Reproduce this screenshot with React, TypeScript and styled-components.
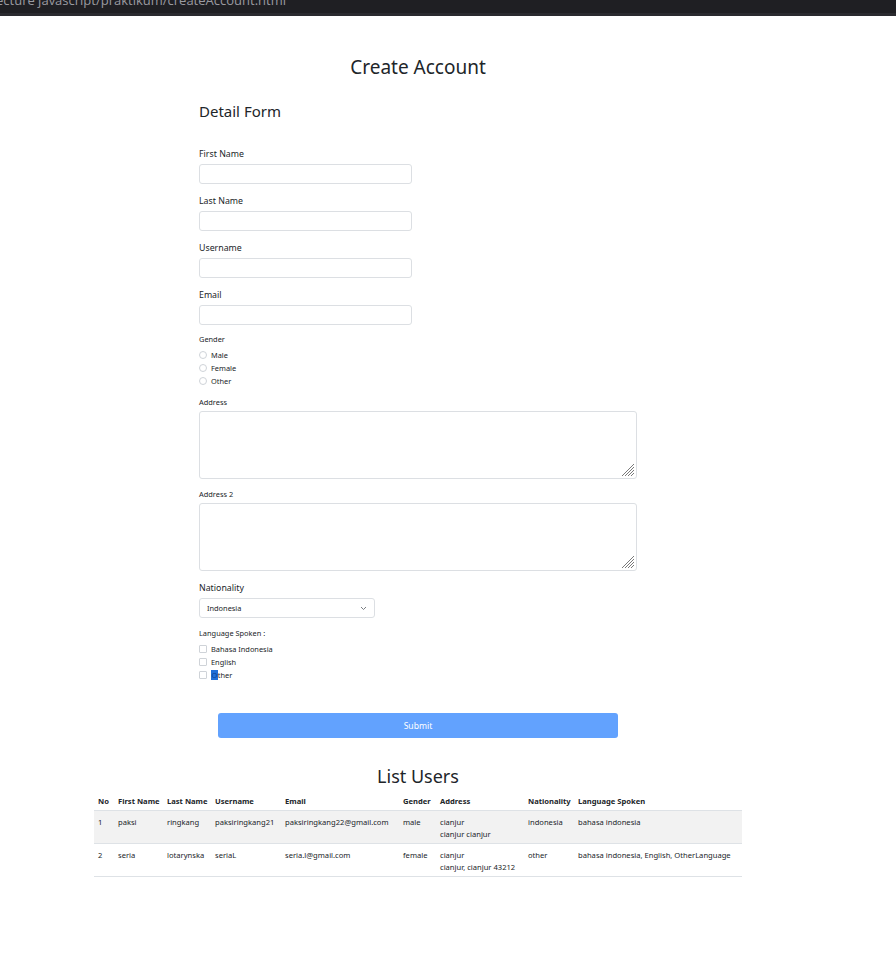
import React from "react";
import styled, { createGlobalStyle } from "styled-components";

const Global = createGlobalStyle`
  html, body { margin: 0; padding: 0; background: #fff; }
  body { font-family: "Noto Sans", "Open Sans", sans-serif; color: #212529; }
  * { box-sizing: border-box; }
`;

const TopBar = styled.div`
  height: 16px;
  background: #1f1f23;
  border-bottom: 3px solid #2a2a2f;
  overflow: hidden;
`;

const BarText = styled.div`
  font-family: "Open Sans", sans-serif;
  font-size: 13px;
  color: #9a9aa0;
  line-height: 13px;
  margin-top: -6px;
  margin-left: -4px;
  white-space: nowrap;
`;

const Page = styled.div`
  width: 836px;
  display: flex;
  flex-direction: column;
  align-items: center;
  padding-top: 38px;
`;

const Title = styled.h1`
  font-size: 19px;
  font-weight: 400;
  margin: 0;
  line-height: 26px;
  text-align: center;
`;

const Form = styled.form`
  width: 438px;
  display: flex;
  flex-direction: column;
  margin-top: 21px;
`;

const FormTitle = styled.h2`
  font-size: 15px;
  font-weight: 400;
  margin: 0 0 27px;
  line-height: 20px;
`;

const Field = styled.div<{ $mb?: number }>`
  display: flex;
  flex-direction: column;
  margin-bottom: ${(p) => p.$mb ?? 8}px;
`;

const Label = styled.label<{ $small?: boolean }>`
  font-size: ${(p) => (p.$small ? 7.4 : 8.8)}px;
  line-height: ${(p) => (p.$small ? 10 : 12)}px;
  margin-bottom: 4px;
  color: #212529;
`;

const TextInput = styled.input`
  width: 213px;
  height: 20px;
  border: 1px solid #dcdfe3;
  border-radius: 3px;
  background: #fff;
  outline: none;
  padding: 0 6px;
`;

const Options = styled.div`
  display: flex;
  flex-direction: column;
  gap: 2px;
  padding-top: 1px;
`;

const Option = styled.div`
  display: flex;
  align-items: center;
  height: 11px;
  font-size: 7.4px;
  color: #212529;
`;

const Radio = styled.span`
  width: 8px;
  height: 8px;
  border: 1px solid #cfd3d8;
  border-radius: 50%;
  margin: 0 4px 0 0;
  flex: none;
`;

const Box = styled.span`
  width: 8px;
  height: 8px;
  border: 1px solid #cfd3d8;
  border-radius: 1px;
  margin: 0 4px 0 0;
  flex: none;
`;

const AreaWrap = styled.div`
  position: relative;
  width: 438px;
  height: 68px;
`;

const Area = styled.textarea`
  display: block;
  width: 438px;
  height: 68px;
  border: 1px solid #dcdfe3;
  border-radius: 3px;
  outline: none;
  resize: none;
`;

const Grip = styled.svg`
  position: absolute;
  right: 2px;
  bottom: 2px;
  pointer-events: none;
`;

const Select = styled.div`
  width: 176px;
  height: 20px;
  border: 1px solid #dcdfe3;
  border-radius: 3px;
  display: flex;
  align-items: center;
  justify-content: space-between;
  padding: 0 7px 0 7px;
  font-size: 7.4px;
`;

const Sel = styled.span`
  background: #1f6fd8;
  color: #0d3f8f;
  padding: 0 0.5px;
`;

const Submit = styled.button`
  width: 400px;
  height: 25px;
  margin: 33px auto 0;
  background: #62a2fe;
  border: none;
  border-radius: 3px;
  color: #fff;
  font-family: "Noto Sans", sans-serif;
  font-size: 8.6px;
`;

const ListTitle = styled.h2`
  font-size: 18px;
  font-weight: 400;
  margin: 27px 0 6px;
  line-height: 22px;
`;

const Table = styled.table`
  width: 648px;
  border-collapse: collapse;
  table-layout: fixed;
  font-size: 7.6px;
`;

const Col = styled.col<{ $w: number }>`
  width: ${(p) => p.$w}px;
`;

const Th = styled.th`
  text-align: left;
  font-weight: 700;
  padding: 3px 4px 4px;
  height: 17px;
  white-space: nowrap;
`;

const Tr = styled.tr<{ $striped?: boolean }>`
  background: ${(p) => (p.$striped ? "#f2f2f2" : "#fff")};
  border-top: 1px solid #dee2e6;
  border-bottom: 1px solid #dee2e6;
`;

const Td = styled.td`
  vertical-align: top;
  padding: 5px 4px 0;
  height: 33px;
  line-height: 12px;
  white-space: nowrap;
`;

const Chevron = () => (
  <svg width="7" height="5" viewBox="0 0 7 5">
    <path d="M1 1l2.5 2.5L6 1" fill="none" stroke="#6b6f75" strokeWidth="0.9" />
  </svg>
);

const ResizeGrip = () => (
  <Grip width="14" height="14" viewBox="0 0 14 14">
    <g stroke="#7a7a7a" strokeWidth="1">
      <line x1="13" y1="1" x2="1" y2="13" />
      <line x1="13" y1="4" x2="4" y2="13" />
      <line x1="13" y1="7" x2="7" y2="13" />
      <line x1="13" y1="10" x2="10" y2="13" />
    </g>
  </Grip>
);

const colWidths = [20, 49, 48, 70, 118, 37, 88, 50, 168];

const users = [
  {
    no: 1,
    first: "paksi",
    last: "ringkang",
    user: "paksiringkang21",
    email: "paksiringkang22@gmail.com",
    gender: "male",
    addr: ["cianjur", "cianjur cianjur"],
    nat: "indonesia",
    lang: "bahasa indonesia",
  },
  {
    no: 2,
    first: "seria",
    last: "lotarynska",
    user: "seriaL",
    email: "seria.l@gmail.com",
    gender: "female",
    addr: ["cianjur", "cianjur, cianjur 43212"],
    nat: "other",
    lang: "bahasa indonesia, English, OtherLanguage",
  },
];

export default function App() {
  return (
    <>
      <Global />
      <TopBar>
        <BarText>ecture javascript/praktikum/createAccount.html</BarText>
      </TopBar>
      <Page>
        <Title>Create Account</Title>
        <Form onSubmit={(e) => e.preventDefault()}>
          <FormTitle>Detail Form</FormTitle>
          <Field $mb={11}>
            <Label>First Name</Label>
            <TextInput />
          </Field>
          <Field $mb={11}>
            <Label>Last Name</Label>
            <TextInput />
          </Field>
          <Field $mb={11}>
            <Label>Username</Label>
            <TextInput />
          </Field>
          <Field $mb={9}>
            <Label>Email</Label>
            <TextInput />
          </Field>
          <Field $mb={11}>
            <Label $small>Gender</Label>
            <Options>
              <Option><Radio />Male</Option>
              <Option><Radio />Female</Option>
              <Option><Radio />Other</Option>
            </Options>
          </Field>
          <Field $mb={10}>
            <Label $small>Address</Label>
            <AreaWrap>
              <Area />
              <ResizeGrip />
            </AreaWrap>
          </Field>
          <Field $mb={11}>
            <Label $small>Address 2</Label>
            <AreaWrap>
              <Area />
              <ResizeGrip />
            </AreaWrap>
          </Field>
          <Field $mb={10}>
            <Label>Nationality</Label>
            <Select>
              <span>Indonesia</span>
              <Chevron />
            </Select>
          </Field>
          <Field $mb={0}>
            <Label $small>Language Spoken :</Label>
            <Options>
              <Option><Box />Bahasa Indonesia</Option>
              <Option><Box />English</Option>
              <Option><Box /><Sel>O</Sel>ther</Option>
            </Options>
          </Field>
          <Submit type="submit">Submit</Submit>
        </Form>
        <ListTitle>List Users</ListTitle>
        <Table>
          <colgroup>
            {colWidths.map((w, i) => (
              <Col key={i} $w={w} />
            ))}
          </colgroup>
          <thead>
            <tr>
              <Th>No</Th>
              <Th>First Name</Th>
              <Th>Last Name</Th>
              <Th>Username</Th>
              <Th>Email</Th>
              <Th>Gender</Th>
              <Th>Address</Th>
              <Th>Nationality</Th>
              <Th>Language Spoken</Th>
            </tr>
          </thead>
          <tbody>
            {users.map((u, i) => (
              <Tr key={u.no} $striped={i % 2 === 0}>
                <Td>{u.no}</Td>
                <Td>{u.first}</Td>
                <Td>{u.last}</Td>
                <Td>{u.user}</Td>
                <Td>{u.email}</Td>
                <Td>{u.gender}</Td>
                <Td>
                  {u.addr[0]}
                  <br />
                  {u.addr[1]}
                </Td>
                <Td>{u.nat}</Td>
                <Td>{u.lang}</Td>
              </Tr>
            ))}
          </tbody>
        </Table>
      </Page>
    </>
  );
}
